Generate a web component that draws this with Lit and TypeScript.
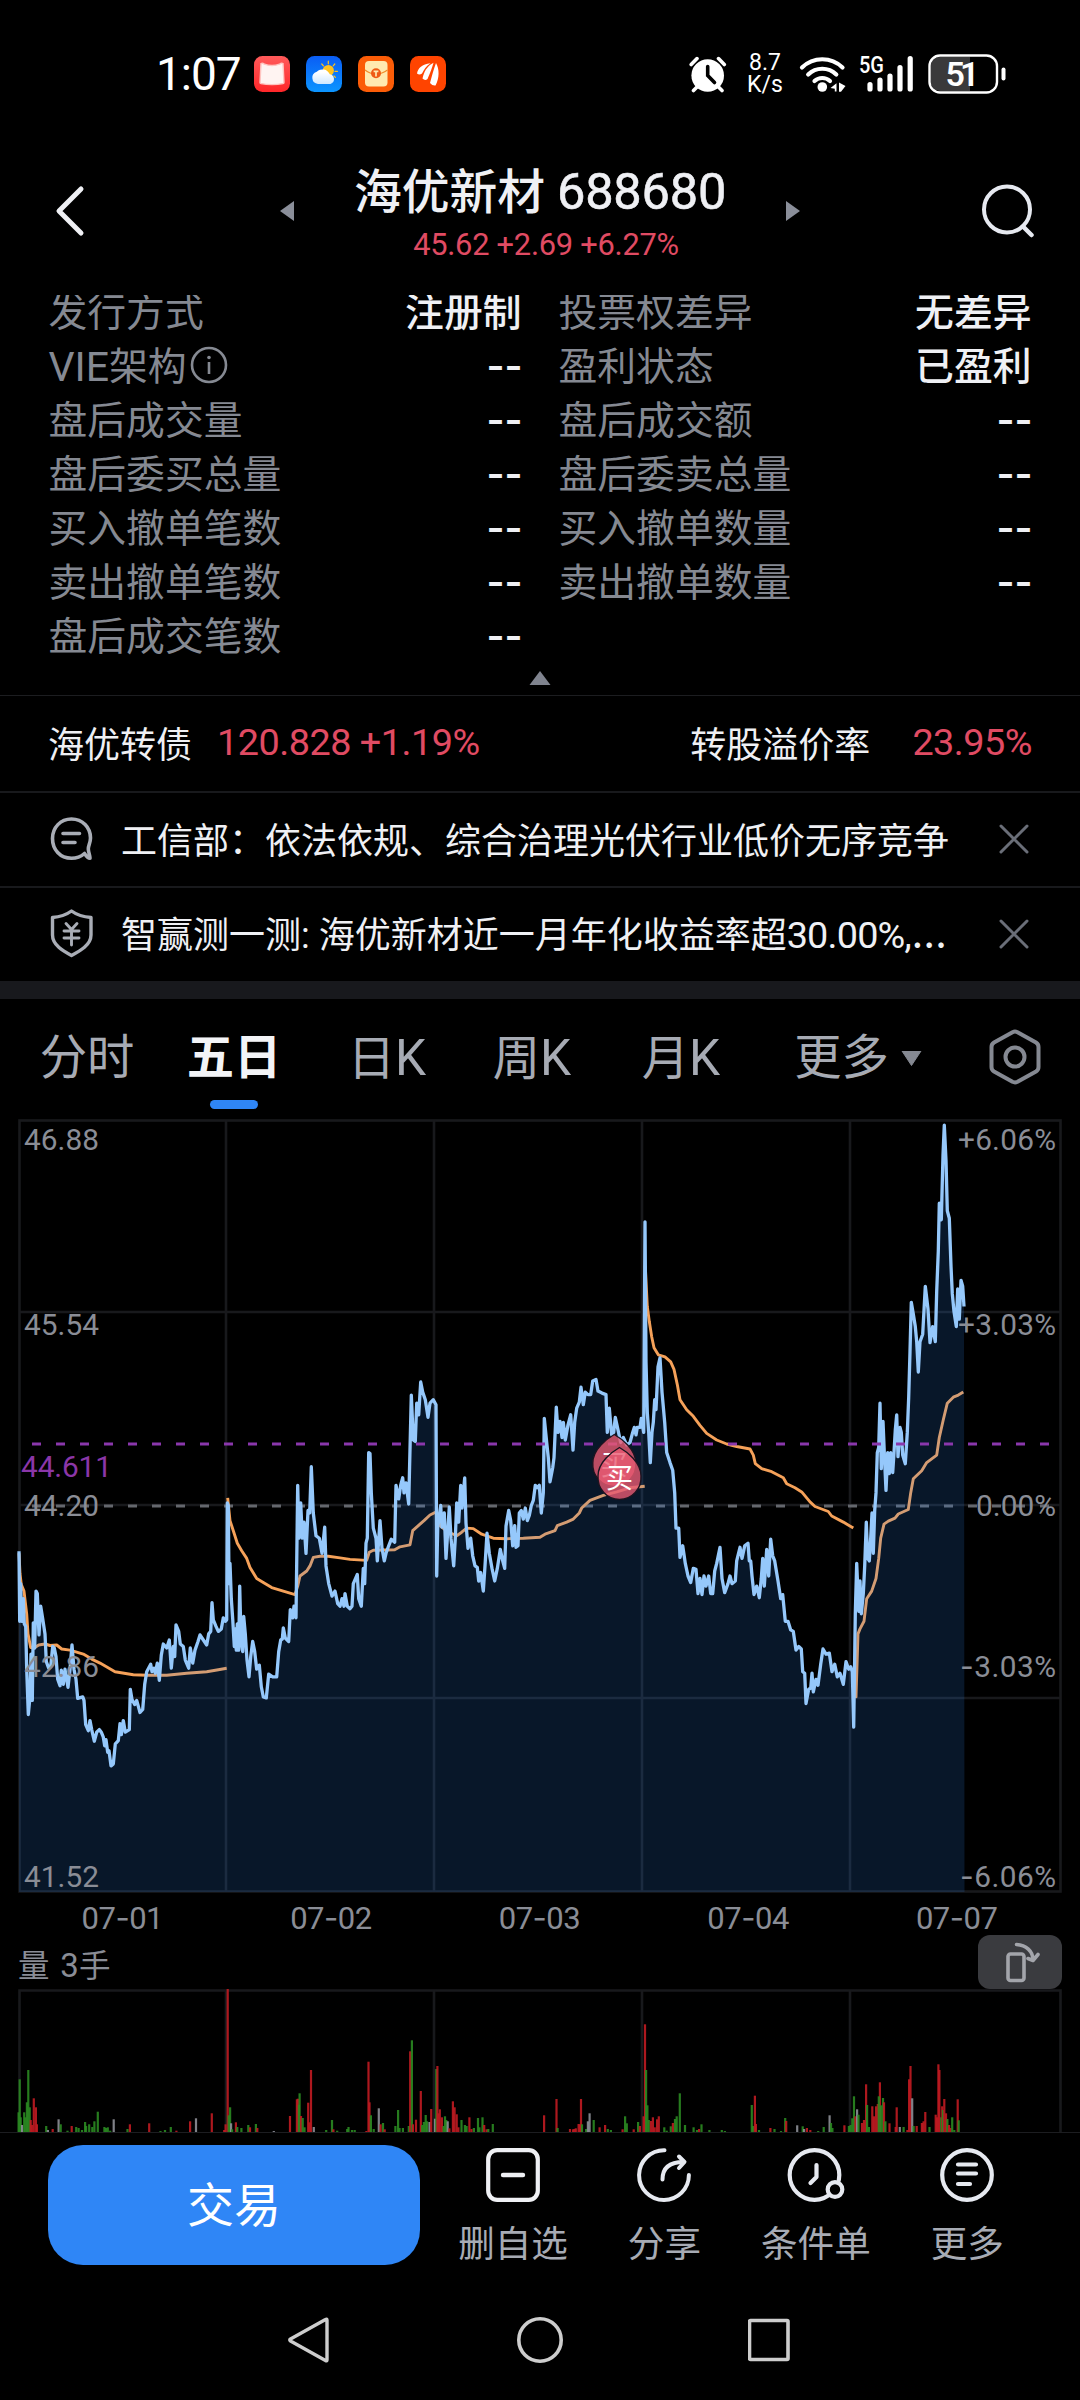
import { LitElement, html, svg, css } from "lit";
import { customElement } from "lit/decorators.js";

/* ---------- series data ---------- */

/** Price chart samples are stored in thirds of a pixel across and in 1/1.985 px down. */
const PRICE_X = 3;
const PRICE_Y = 1.985;
const PRICE_TOP = 9;

type Segment = { from: number; points: string };

const PRICE: Segment[] = [
  {
    from: 0,
    points:
      "57,876 59,1015 62,940 65,1015 70,970 73,1020 77,1025 80,1110 85,1200 90,1165 93,1080 97,1172 100,1018 104,1068 108,955 112,960 117,1042 122,985 128,1010 135,1040 139,1095 146,1108 152,1105 158,1065 163,1068 168,1085 173,1130 180,1143 184,1112 190,1140 195,1110 204,1146 210,1110 216,1062 222,1110 228,1130 233,1168 248,1165 252,1172 257,1220 265,1232 270,1212 275,1230 283,1253 290,1235 298,1230 304,1235 310,1245 314,1262 318,1250 323,1275 327,1272 333,1302 340,1298 346,1258 355,1252 360,1218 364,1240 370,1212 376,1235 388,1230 391,1150 396,1170 404,1180 410,1172 420,1196 428,1190 434,1140 440,1115 452,1100 456,1115 462,1108 466,1118 472,1098 478,1132 484,1082 490,1060 500,1068 508,1052 514,1108 520,1065 524,1085 528,1022 536,1035 541,1060 550,1065 556,1092 566,1108 571,1068 578,1098 585,1072 594,1055 600,1042 608,1050 620,1062 626,1040 632,1035 636,978 640,1012 648,1025 655,1035 664,1030 670,1008 676,1015 680,1012 682,780 685,785 687,940 690,900 694,970 698,1010 703,1065 706,1030 709,1072 712,1020 716,1072 719,945 723,1050 728,1075 731,1005 736,1040 741,1092 747,1125 752,1085 758,1055 764,1075 770,1110 778,1102 784,1145 790,1165 799,1167 806,1120 818,1125 830,1125 836,1075 842,1052 847,1050 850,1028 856,1048 866,1055 871,992 878,1008 882,985 888,1008 893,745 897,850 902,780 907,850 912,818 918,880 924,795 929,800 934,708 940,800 948,845 958,850 966,880 974,828 978,905 986,940 996,965 1005,955 1013,980 1020,985 1026,970 1032,985 1035,960 1042,985",
  },
  {
    from: 1050,
    points:
      "0,990 6,985 10,940 22,922 26,970 34,985 40,910 44,940 48,860 52,850 56,680 60,682 64,760 70,830 78,850 82,895 90,815 96,870 103,895 108,880 116,865 124,852 134,858 138,745 146,772 152,745 158,730 162,760 168,740 176,782 184,566 190,655 196,658 200,582 206,605 212,540 218,560 226,575 234,610 240,582 250,575 258,585 260,925 263,830 272,785 276,828 283,800 288,890 292,850 298,788 303,850 311,905 316,850 320,780 326,818 332,745 336,790 344,730 348,820 354,870 362,850 368,885 375,905 382,908 386,935 392,918 400,955 405,905 411,840 418,880 426,910 434,935 442,910 451,872 458,895 464,910 468,826 476,795 482,815 488,865 494,825 498,868 504,865 508,800 514,795 520,812 526,790 532,815 538,805 544,785 550,775 556,745 562,750 568,745 574,800 580,760 583,612 590,660 595,690 600,738 608,710 612,690 619,590 624,640 630,618 636,650 640,620 646,655 654,625 662,605 669,675 674,620 680,592 688,580 693,550 700,585 706,560 714,565 722,565 728,538 738,535 744,558 756,562 768,565 772,640 778,592 785,645 791,640 796,610 804,635 812,660 820,650 830,665 840,660 848,640 853,630 858,645 862,630 870,630 874,612 881,640 885,222 888,500 892,600 896,640 901,700 906,640 910,620 914,575 918,595 924,510 930,492 936,560 944,620 950,680 960,700 968,715 974,760 978,830 986,830 990,888 998,865 1006,900 1014,925 1022,938 1030,910 1038,912 1044,960",
  },
  {
    from: 2100,
    points:
      "0,930 6,962 12,925 18,945 26,925 32,960 38,960 44,915 50,900 60,868 66,930 74,958 84,940 90,925 96,940 106,935 110,895 120,868 126,890 134,865 144,860 148,895 152,895 156,925 162,962 170,945 178,968 184,930 188,890 193,945 200,872 206,925 212,852 218,885 224,895 234,935 242,970 248,962 256,1015 264,1015 272,1032 280,1035 288,1072 296,1065 304,1070 308,1115 314,1118 318,1178 326,1150 332,1148 336,1118 340,1155 348,1130 354,1142 362,1100 369,1070 378,1080 388,1078 396,1115 404,1100 412,1125 420,1118 430,1140 438,1095 446,1110 452,1105 457,1115 461,1225 463,1140 466,1000 470,900 476,995 480,935 484,1000 490,960 494,905 499,818 503,890 508,895 512,850 516,800 520,880 524,795 528,760 532,680 536,670 540,582 544,712 549,618 554,700 558,755 563,680 568,722 572,680 578,720 582,680 586,635 590,605 594,688 600,630 604,640 608,685 616,702 622,640 626,570 630,480 634,382 640,405 646,430 650,460 655,520 660,460 668,445 676,350 684,395 690,462 698,430 706,460 710,360 715,280 718,185 724,218 729,90 733,30 738,100 742,200 748,215 753,310 757,365 762,400 769,430 773,355 778,415 783,338 788,350 792,390",
  },
];

const AVERAGE: Segment[][] = [
  [
    {
      from: 0,
      points:
        "57,880 60,920 64,942 72,955 80,1000 84,1040 92,1067 102,1068 116,1062 135,1060 150,1063 170,1062 185,1070 210,1072 250,1080 275,1090 300,1098 345,1115 400,1121 440,1122 500,1122 560,1118 620,1115 655,1111 680,1108",
    },
  ],
  [
    {
      from: 0,
      points:
        "683,770 690,815 700,835 712,860 725,875 740,890 750,908 770,930 790,938 815,948 850,955 885,962 893,945 900,925 920,915 930,905 940,888 960,886 985,886 1020,889",
    },
    {
      from: 1050,
      points:
        "0,892 50,894 58,878 70,874 134,873 150,867 180,863 188,835 210,822 222,815 240,804 258,798",
    },
  ],
  [
    {
      from: 1050,
      points:
        "262,802 270,825 290,836 320,845 335,838 350,830 370,831 395,842 430,850 470,851 520,850 570,848 585,842 615,835 622,825 650,818 670,812 688,800 695,790 720,775 760,765 800,758 840,750 884,747",
    },
  ],
  [
    {
      from: 1050,
      points:
        "886,310 892,390 898,420 905,450 912,472 925,486 945,490 962,500 972,515 982,545 990,575 1010,595 1030,608",
    },
    {
      from: 2100,
      points:
        "0,626 20,642 50,655 80,663 110,668 150,673 160,685 166,702 185,712 215,718 250,730 260,742 285,750 305,758 330,778 345,787 385,797 395,806 430,818 460,830",
    },
  ],
  [
    {
      from: 2100,
      points:
        "459,1120 468,1165 474,1040 480,1030 492,1015 500,970 515,955 528,930 536,890 542,850 552,822 565,816 585,810 595,802 625,793 632,760 640,732 665,716 680,700 710,685 718,650 730,615 742,582 760,570 775,566 790,560",
    },
  ],
];

/** Volume bars: colour key, then x and top of the bar in a finer raster. */
const VOLUME_X = 2.904;
const VOLUME_BASE = 756;
const VOLUME: Segment[] = [
  {
    from: 0,
    points:
      "g57,598 g54,697 g60,712 w64,735 g70,697 g74,712 g78,667 g82,570 g86,682 r89,720 r93,735 r98,655 r104,682 r107,733 g134,738 w139,750 r153,747 w170,718 g176,733 g196,752 r208,738 g221,741 g228,744 g238,750 g247,726 g250,738 g259,733 g268,741 g274,724 g284,695 g303,741 g308,744 g313,742 g320,752 w330,718 g370,747 r377,733 r433,730 g466,753 g479,750 g496,741 r512,752 r552,724 w569,715 r615,700 r651,750 r655,733 r661,327 g664,706 g668,682 w671,730 g674,748 r685,727 g689,741 g701,744 g721,735 r726,742 g743,732 r747,744 w795,753 r842,708 r862,658 r865,656 g870,640 g868,674 r874,708 g879,714 g884,742 r895,668 r903,570 r899,727 w911,741 g947,750 g964,720 r968,748 g979,752 g1008,747 g1012,741 g1022,750 g1030,750 r1064,753 r1070,545 r1073,667 g1077,706 g1085,747 w1100,685 r1105,733 g1112,729 r1117,748 g1148,738 g1156,690 g1160,744 g1170,744 g1187,738 r1191,514 g1196,481 r1199,733 r1208,719 r1222,633 g1226,735 g1231,726 g1236,705 g1240,724 w1247,726 r1252,687 w1263,716 g1267,567 r1270,558 r1273,700 r1277,688 r1283,712 g1288,738 g1292,709 g1296,720 w1300,724 r1305,745 r1315,664 r1320,682 r1326,703 r1331,742 g1340,720 g1350,735 g1355,738 r1363,712 r1369,747 g1376,744 g1388,714 g1392,742 g1401,712 r1406,735 r1413,748 g1418,747 g1431,732",
  },
  {
    from: 1568,
    points:
      "r12,706 r48,657 g51,744 r87,747 r96,748 r100,747 r104,745 r112,732 r116,733 r119,657 g122,733 g134,747 w139,724 w144,700 g156,720 r173,742 r189,735 g197,747 g206,750 r240,748 g247,709 g252,730 r272,748 g285,726 r290,738 r301,709 r305,433 g308,570 g312,676 g316,720 r322,723 r328,712 r333,742 r340,718 r345,709 g361,742 g368,752 g380,739 r386,729 g392,717 g397,709 g406,640 g421,735 g446,742 g456,750 r462,747 g469,733 g492,750 g528,750 g537,753 g615,675 g619,738 r624,647 r627,732 g636,750 r669,744 g681,747 g700,753 g712,714 r715,723 w747,736 g763,739 w767,747 r775,744 r785,750 g808,753 g824,741 w841,706 g845,729 g849,744 r884,736 g897,738 g902,735 g907,715 g912,649 r916,709 w921,688 g925,704 r935,729 r941,720 r947,613 g950,675 g955,741 r965,679 r970,709 r976,679 r981,672 r987,607 g984,649 g990,676 g996,654 r999,667 g1003,724 r1015,730 r1036,682 r1033,741 w1045,741 g1056,741 r1067,750 r1072,598 r1076,558 w1081,655 g1085,738 r1094,738 r1109,729 r1114,724 r1119,696 g1131,741 r1149,704 r1153,712 r1157,553 r1160,570 g1165,712 r1168,679 g1170,690 r1174,657 r1179,700 g1183,717 r1188,735 r1192,744 g1197,712 g1203,750 r1213,658 g1216,721",
  },
];

const BAR_COLORS: Record<string, string> = { r: "#c01b21", g: "#2a8a21", w: "#8d8f97" };

const toPoints = (segments: Segment[]) =>
  segments
    .flatMap((s) =>
      s.points.split(" ").map((p) => {
        const [x, y] = p.split(",").map(Number);
        return `${((x + s.from) / PRICE_X).toFixed(1)},${(y / PRICE_Y - PRICE_TOP).toFixed(1)}`;
      })
    )
    .join(" ");

const pricePoints = toPoints(PRICE);
const bars = VOLUME.flatMap((s) =>
  s.points.split(" ").map((p) => {
    const [x, y] = p.slice(1).split(",").map(Number);
    return { x: (x + s.from) / VOLUME_X, h: (VOLUME_BASE - y) / 3, fill: BAR_COLORS[p[0]] };
  })
);

const COLUMNS = [226, 434, 642, 850];

const STATS: [string, string][][] = [
  [
    ["发行方式", "注册制"],
    ["VIE架构", "--"],
    ["盘后成交量", "--"],
    ["盘后委买总量", "--"],
    ["买入撤单笔数", "--"],
    ["卖出撤单笔数", "--"],
    ["盘后成交笔数", "--"],
  ],
  [
    ["投票权差异", "无差异"],
    ["盈利状态", "已盈利"],
    ["盘后成交额", "--"],
    ["盘后委卖总量", "--"],
    ["买入撤单数量", "--"],
    ["卖出撤单数量", "--"],
  ],
];

/* ---------- icons ---------- */

const closeIcon = html`<svg class="close" width="30" height="30" viewBox="0 0 30 30">
  <path d="M2 2 28 28M28 2 2 28" stroke="#6a6e78" stroke-width="3" stroke-linecap="round" fill="none" />
</svg>`;

const infoIcon = html`<svg class="info" width="38" height="38" viewBox="0 0 38 38">
  <circle cx="19" cy="19" r="17" fill="none" stroke="#858992" stroke-width="2.6" />
  <circle cx="19" cy="11.5" r="1.8" fill="#858992" />
  <path d="M19 16V28" stroke="#858992" stroke-width="2.6" />
</svg>`;

/* ---------- status bar ---------- */

@customElement("status-bar")
export class StatusBar extends LitElement {
  static styles = css`
    :host {
      display: flex;
      align-items: center;
      justify-content: space-between;
      height: 150px;
      box-sizing: border-box;
      padding: 0 74px 2px 156px;
      color: #fff;
      font-family: Roboto, "Noto Sans CJK SC", sans-serif;
    }
    .side {
      display: flex;
      align-items: center;
    }
    .time {
      font-size: 46px;
      line-height: 50px;
      width: 98px;
      letter-spacing: -1px;
      font-weight: 450;
    }
    .apps {
      display: flex;
      gap: 16px;
    }
    .speed {
      width: 46px;
      margin: 0 11px 0 15px;
      text-align: center;
      font-size: 23px;
      line-height: 22px;
      font-weight: 450;
    }
    .signal {
      margin-left: 12px;
    }
    .battery {
      margin-left: 14px;
    }
    svg {
      display: block;
    }
  `;

  render() {
    return html`
      <div class="side">
        <span class="time">1:07</span>
        <div class="apps">
          <svg width="36" height="36" viewBox="0 0 36 36">
            <defs>
              <linearGradient id="a" x1="0" y1="0" x2="0" y2="1">
                <stop offset="0" stop-color="#ff5a5a" />
                <stop offset="1" stop-color="#ff2629" />
              </linearGradient>
            </defs>
            <rect width="36" height="36" rx="8.5" fill="url(#a)" />
            <path
              d="M7 7.5Q8.5 6.600 10.500 8.200 14 9.500 18 9.500T25.500 8.200Q27.500 6.600 29 7.500L30 26.500Q30 27.500 29 27.600 24 28.600 18 28.600T7 27.600Q6 27.500 6 26.500Z"
              fill="#fff4f2" stroke="#ffc4c0" stroke-width="1.4"
            />
          </svg>
          <svg width="36" height="36" viewBox="0 0 36 36">
            <defs>
              <linearGradient id="b" x1="0" y1="0" x2="0" y2="1">
                <stop offset="0" stop-color="#0a5df5" />
                <stop offset="1" stop-color="#0c95ff" />
              </linearGradient>
              <linearGradient id="c" x1="0" y1="0" x2="0" y2="1">
                <stop offset="0.2" stop-color="#fff" />
                <stop offset="1" stop-color="#cfe8ff" />
              </linearGradient>
            </defs>
            <rect width="36" height="36" rx="8.5" fill="url(#b)" />
            <circle cx="22.3" cy="14.5" r="5.6" fill="#ffc21f" />
            <path
              d="M22.3 5.2v2.6M15.8 8l1.6 1.8M28.8 8l-1.6 1.8M29 15.4h2.4M28 20l1.4 1.4"
              stroke="#ffc21f" stroke-width="1.2" stroke-linecap="round"
            />
            <path
              d="M12 28a6.3 6.3 0 0 1-1.2-12.3 8 8 0 0 1 13 2.6A5 5 0 0 1 24.5 28Z"
              fill="url(#c)"
            />
          </svg>
          <svg width="36" height="36" viewBox="0 0 36 36">
            <rect width="36" height="36" rx="8.5" fill="#fb5c07" />
            <rect x="7" y="5" width="22.5" height="25.5" rx="4" fill="#ffe9b0" />
            <path d="M7 14Q12 18 18 18T29.5 14" fill="none" stroke="#f08a2a" stroke-width="1.3" />
            <circle cx="18" cy="17.3" r="5" fill="#ef5a14" />
            <path d="M15.6 15.400h4.800M18 15.400v5" stroke="#ffe9b0" stroke-width="1.7" />
          </svg>
          <svg width="36" height="36" viewBox="0 0 36 36">
            <rect width="36" height="36" rx="8.5" fill="#ff4400" />
            <g fill="#fff">
              <path d="M7 17.500C8 12 12 8 20.500 7.200 16 10 14 13.500 12 17.500Q9.500 19.500 7 17.500Z" />
              <path d="M12.500 22.500C14 16 16.500 10.500 23.500 6.800 22 12 20 17.500 17.500 23Q15 25 12.500 22.500Z" />
              <path d="M20 27C22 20 23.500 13.500 26 7 29.500 13 29.500 22 25.500 29.500Q22.500 30 20 27Z" />
            </g>
          </svg>
        </div>
      </div>
      <div class="side">
        <svg width="38" height="38" viewBox="0 0 38 38">
          <circle cx="18.7" cy="20.500" r="16.300" fill="#fff" />
          <path
            d="M2.200 9.500 8 3.600M35.300 9.500 29.500 3.600M8 32 4.500 35.500M29.500 32 33 35.500"
            stroke="#fff" stroke-width="3.600" stroke-linecap="round"
          />
          <path d="M18.700 11.500V20.500L25.500 27.500" fill="none" stroke="#000" stroke-width="3.600" stroke-linecap="round" />
        </svg>
        <div class="speed">8.7<br />K/s</div>
        <svg width="48" height="38" viewBox="0 0 48 38">
          <g fill="none" stroke="#fff" stroke-width="4.200" stroke-linecap="round">
            <path d="M3 12.500A29 29 0 0 1 43.500 12.500" />
            <path d="M9.200 19.500A20 20 0 0 1 37.300 19.500" />
            <path d="M15.500 26A11.500 11.500 0 0 1 31 26" />
          </g>
          <circle cx="23.300" cy="32" r="4.800" fill="#fff" />
          <path d="M37.500 28.200V36.500H35.800V33.800L31.500 33ZM40 27.500 46.500 31 42 36.800H40Z" fill="#fff" />
        </svg>
        <svg class="signal" width="55" height="38" viewBox="0 0 55 38">
          <text x="0" y="18.300" font-size="23" font-weight="500" fill="#fff" textLength="25" lengthAdjust="spacingAndGlyphs">5G</text>
          <path d="M11 29.500V34M21 25V34M31 21V34M41 12.500V34M51.200 3.500V34" stroke="#fff" stroke-width="5.200" stroke-linecap="round" />
        </svg>
        <svg class="battery" width="78" height="40" viewBox="0 0 78 40">
          <path d="M12 3H42V37H12A9.500 9.500 0 0 1 2.500 27.500V12.500A9.500 9.500 0 0 1 12 3Z" fill="#3a3a3b" />
          <rect x="1.500" y="1.500" width="67.500" height="37" rx="10.500" fill="none" stroke="#fff" stroke-width="2.400" />
          <path d="M75.500 15.500V24.500" stroke="#fff" stroke-width="4" stroke-linecap="round" />
          <text x="17.500" y="32" font-size="34" font-weight="600" fill="#fff" textLength="34">51</text>
        </svg>
      </div>
    `;
  }
}

/* ---------- five-day chart ---------- */

@customElement("price-chart")
export class PriceChart extends LitElement {
  static styles = css`
    :host {
      display: block;
      font-family: Roboto, "Noto Sans CJK SC", sans-serif;
    }
    svg {
      display: block;
    }
    .axis {
      font-size: 29.8px;
      fill: #8a8d96;
    }
    .cost {
      fill: #8b36a8;
    }
    .dash {
      font-family: Inter, sans-serif;
    }
    .pin {
      font-size: 27px;
      font-weight: 400;
      fill: #fff;
    }
    .dates {
      display: grid;
      grid-template-columns: repeat(5, 208.6px);
      padding-left: 18px;
      height: 52px;
      line-height: 50px;
      text-align: center;
      color: #8a8d96;
      font-size: 31px;
      letter-spacing: -0.5px;
    }
    .legend {
      display: flex;
      justify-content: space-between;
      height: 44px;
      padding: 0 18px;
    }
    .volume {
      color: #8a8d96;
      font-size: 31.5px;
      line-height: 42px;
    }
    .digit {
      font-size: 33px;
      margin-left: 3px;
    }
    .rotate {
      width: 84px;
      height: 54px;
      margin-top: -10px;
      border-radius: 12px;
      background: #3a3b3f;
    }
  `;

  private axisLabel(text: string, y: number, side: "l" | "r") {
    const minus = text.startsWith("-");
    const zero = text.startsWith("0");
    const x = side === "l" ? 24 : zero ? 976 : minus ? 960 : 958;
    const w = side === "l" ? 75 : zero ? 80 : minus ? 96 : 98;
    return minus
      ? svg`<text class="axis" x=${x} y=${y} textLength=${w}><tspan class="dash">-</tspan>${text.slice(1)}</text>`
      : svg`<text class="axis" x=${x} y=${y} textLength=${w}>${text}</text>`;
  }

  private pin(x: number, y: number) {
    return svg`<g transform="translate(${x} ${y})">
      <path d="M0-31.500C7-27.500 21.500-17 21.500-3A21.500 22 0 0 1 0 20.500 21.500 22 0 0 1-21.500-3C-21.500-17-7-27.500 0-31.500Z"
        fill="#e95a72" fill-opacity="0.800" stroke="#1c1420" stroke-width="1.400" />
      <text class="pin" x="0" y="9" text-anchor="middle">买</text>
    </g>`;
  }

  render() {
    return html`
      <svg width="1080" height="774" viewBox="0 0 1080 774">
        <g stroke="#18191c" fill="none">
          <rect x="19.500" y="1.500" width="1041" height="771" stroke-width="2.600" />
          ${COLUMNS.map((x) => svg`<path d="M${x} 1V773" stroke-width="2.600" />`)}
          ${[193, 386, 579].map((y) => svg`<path d="M20 ${y}H1060" stroke-width="2.600" />`)}
        </g>
        <path d="M32 387H1049" stroke="#64676d" stroke-width="2.800" stroke-dasharray="9 15" />
        ${AVERAGE.map(
          (day) => svg`<polyline points=${toPoints(day)} fill="none" stroke="#f5a159" stroke-width="2.900" stroke-linejoin="round" />`
        )}
        <polygon points="19,773 ${pricePoints} 964.500,773" fill="rgb(47,134,246)" fill-opacity="0.170" />
        <polyline points=${pricePoints} fill="none" stroke="#95c8fb" stroke-width="3.300" stroke-linejoin="round" />
        <path d="M32 325H1049" stroke="#8a37ac" stroke-width="2.800" stroke-dasharray="9 15" />
        ${this.pin(614.3, 347)} ${this.pin(619.5, 360)}
        ${this.axisLabel("46.88", 31, "l")} ${this.axisLabel("45.54", 216, "l")}
        ${this.axisLabel("44.20", 397, "l")} ${this.axisLabel("42.86", 558, "l")}
        ${this.axisLabel("41.52", 767.5, "l")}
        <text class="axis cost" x="21" y="358" textLength="91">44.611</text>
        ${this.axisLabel("+6.06%", 31, "r")} ${this.axisLabel("+3.03%", 216, "r")}
        ${this.axisLabel("0.00%", 397, "r")} ${this.axisLabel("-3.03%", 558, "r")}
        ${this.axisLabel("-6.06%", 767.5, "r")}
      </svg>
      <div class="dates">
        ${["01", "02", "03", "04", "07"].map(
          (d) => html`<span>07<span class="dash">-</span>${d}</span>`
        )}
      </div>
      <div class="legend">
        <span class="volume">量 <span class="digit">3</span>手</span>
        <svg class="rotate" width="84" height="54" viewBox="0 0 84 54">
          <g fill="none" stroke="#a3a5ab" stroke-width="3.600" stroke-linecap="round" stroke-linejoin="round">
            <rect x="30" y="19" width="16" height="26.500" rx="2.500" />
            <path d="M38.500 9.500C48 10 55 16 55 25M50 23.500 55 25.500 60 19.500" />
          </g>
        </svg>
      </div>
      <svg width="1080" height="143" viewBox="0 0 1080 143">
        <g stroke="#18191c" fill="none" stroke-width="2.600">
          <path d="M19.500 143V1.500H1060.500V143" />
          ${COLUMNS.map((x) => svg`<path d="M${x} 1V143" />`)}
        </g>
        ${bars.map(
          (b) => svg`<rect x=${(b.x - 1.05).toFixed(1)} y=${(143 - b.h).toFixed(1)} width="2.200" height=${b.h.toFixed(1)} fill=${b.fill} fill-opacity="0.900" />`
        )}
      </svg>
    `;
  }
}

/* ---------- page ---------- */

@customElement("app-root")
export class AppRoot extends LitElement {
  static styles = css`
    :host {
      display: block;
      width: 1080px;
      height: 2400px;
      overflow: hidden;
      background: #000;
      color: #eff0f4;
      font-family: Roboto, "Noto Sans CJK SC", sans-serif;
    }
    svg {
      display: block;
      flex: none;
    }
    .header {
      display: grid;
      grid-template-columns: 280px 14px 1fr 14px 280px;
      height: 145px;
      box-sizing: border-box;
      padding-bottom: 23px;
      align-items: center;
    }
    .back {
      margin-left: 54px;
    }
    .search {
      margin: 0 45px 0 auto;
    }
    .title {
      text-align: center;
      padding-top: 8px;
    }
    .name {
      font-size: 47.8px;
      line-height: 56px;
      font-weight: 500;
      white-space: nowrap;
    }
    .code {
      font-size: 50.5px;
      font-weight: 400;
      -webkit-text-stroke: 0.6px;
      letter-spacing: -0.2px;
    }
    .quote {
      font-size: 30.8px;
      line-height: 44px;
      margin: 2px 0 0 12px;
      color: #e04b63;
      letter-spacing: -0.25px;
    }
    .stats {
      height: 400px;
      overflow: hidden;
    }
    .columns {
      display: flex;
      gap: 37px;
      padding: 0 48.5px;
      margin-top: -9.5px;
      height: 385px;
    }
    .column {
      flex: 1;
    }
    .stat {
      display: flex;
      justify-content: space-between;
      font-size: 38.8px;
      line-height: 54px;
      height: 54px;
      color: #eff0f4;
      font-weight: 500;
    }
    .label {
      display: flex;
      align-items: center;
      color: #858992;
      font-weight: 400;
    }
    .label .vie {
      font-size: 41px;
    }
    .label .info {
      margin: -4px 0 0 3px;
    }
    .dashes {
      font-family: Inter, sans-serif;
      font-weight: 600;
      line-height: 51px;
      margin-right: -1px;
    }
    .fold {
      margin: 0.5px auto 0;
    }
    .row {
      display: flex;
      align-items: center;
      height: 93px;
      box-sizing: border-box;
      padding: 0 48px 3px;
      font-size: 36px;
      white-space: nowrap;
    }
    .rule {
      height: 2px;
      background: #18191c;
    }
    .bond {
      height: 96px;
      border-top: 1px solid #1c1d20;
    }
    .num {
      color: #e04b63;
      font-size: 37.8px;
      letter-spacing: -0.5px;
    }
    .price {
      margin-left: 25px;
    }
    .premium {
      margin: 0 42px 0 auto;
    }
    .news {
      margin-left: 27px;
      width: 834px;
      overflow: hidden;
    }
    .latin {
      font-size: 37.8px;
      letter-spacing: -0.8px;
    }
    .ellipsis {
      font-family: Inter, sans-serif;
      font-size: 41px;
      line-height: 30px;
    }
    .close {
      margin: 2px 3px 0 auto;
    }
    .ask .news {
      margin-bottom: 3px;
    }
    .band {
      height: 18px;
      background: #18191d;
    }
    .tabs {
      display: grid;
      grid-template-columns: 174px 120px 186px 104px 194px 160px 142px;
      height: 120px;
      font-size: 47.3px;
      line-height: 118px;
      text-align: center;
      color: #a7abb4;
      font-weight: 400;
    }
    .k {
      font-size: 49.5px;
    }
    .active {
      color: #f3f4f7;
      font-weight: 700;
      display: flex;
      flex-direction: column;
      align-items: center;
    }
    .active::after {
      content: "";
      width: 48px;
      height: 9px;
      border-radius: 5px;
      margin-top: -17px;
      background: #2f86f6;
    }
    .more {
      display: flex;
      align-items: center;
      justify-content: center;
      gap: 12px;
      padding-bottom: 2px;
    }
    .gear {
      margin: 30px 39px 0 auto;
    }
    .actions {
      display: flex;
      height: 157px;
      box-sizing: border-box;
      border-top: 1px solid #1c1d20;
      padding: 12px 37px 0 48px;
    }
    .trade {
      width: 372px;
      height: 120px;
      border-radius: 35px;
      background: #2f86f6;
      color: #fff;
      font-size: 47px;
      line-height: 122px;
      text-align: center;
      margin-right: 17.5px;
    }
    .action {
      width: 151.5px;
      display: flex;
      flex-direction: column;
      align-items: center;
      padding-top: 2.5px;
      font-size: 36.6px;
      line-height: 50px;
      color: #a7abb4;
      font-weight: 400;
      gap: 18px;
    }
    .navbar {
      display: flex;
      justify-content: center;
      align-items: center;
      gap: 185px;
      height: 101px;
    }
  `;

  private stat([label, value]: [string, string]) {
    const vie = label.startsWith("VIE");
    return html`<div class="stat">
      <span class="label">${vie ? html`<span class="vie">VIE</span>${label.slice(3)}${infoIcon}` : label}</span>
      <span class=${value === "--" ? "dashes" : "value"}>${value}</span>
    </div>`;
  }

  render() {
    return html`
      <status-bar></status-bar>
      <div class="header">
        <svg class="back" width="32" height="52" viewBox="0 0 32 52">
          <path d="M27 4 5 26 27 48" fill="none" stroke="#eff0f4" stroke-width="5" stroke-linecap="round" stroke-linejoin="round" />
        </svg>
        <svg width="14" height="20" viewBox="0 0 14 20"><path d="M14 0V20L0 10Z" fill="#8a8e99" /></svg>
        <div class="title">
          <div class="name">海优新材 <span class="code">688680</span></div>
          <div class="quote">45.62 +2.69 +6.27%</div>
        </div>
        <svg width="14" height="20" viewBox="0 0 14 20"><path d="M0 0V20L14 10Z" fill="#8a8e99" /></svg>
        <svg class="search" width="54" height="54" viewBox="0 0 54 54">
          <circle cx="26" cy="25.500" r="23" fill="none" stroke="#e6e9f0" stroke-width="4" />
          <path d="M42 42.500 50.500 51" stroke="#e6e9f0" stroke-width="4.500" stroke-linecap="round" />
        </svg>
      </div>

      <div class="stats">
        <div class="columns">
          ${STATS.map((column) => html`<div class="column">${column.map((s) => this.stat(s))}</div>`)}
        </div>
        <svg class="fold" width="22" height="14" viewBox="0 0 22 14"><path d="M11 0 21.500 14H0.500Z" fill="#80848f" /></svg>
      </div>

      <div class="row bond">
        <span>海优转债</span><span class="num price">120.828 +1.19%</span>
        <span class="premium">转股溢价率</span><span class="num">23.95%</span>
      </div>
      <div class="rule"></div>
      <div class="row">
        <svg width="46" height="46" viewBox="0 0 46 46">
          <g fill="none" stroke="#a9adb6" stroke-width="3.600" stroke-linecap="round" stroke-linejoin="round">
            <path d="M36.500 38.500C32.500 42 28 43.300 23.500 43.300 12 43.300 4.500 34.500 4.500 23.500S12.500 4 23.500 4 42.500 12.500 42.500 23C42.500 28 40 31 40.300 34 40.500 38 42 40 42 43.300 40 43.500 38.500 41.500 36.500 38.500Z" />
            <path d="M15 18.500H31.500M15 27.500H27" />
          </g>
        </svg>
        <span class="news">工信部：依法依规、综合治理光伏行业低价无序竞争</span>
        ${closeIcon}
      </div>
      <div class="rule"></div>
      <div class="row ask">
        <svg width="46" height="50" viewBox="0 0 46 50">
          <g fill="none" stroke="#a9adb6" stroke-width="3.400" stroke-linecap="round" stroke-linejoin="round">
            <path d="M23.500 3C29 7 36 9 43 9.500V27C43 37 32 43 23.500 47.500 15 43 4.500 37 4.500 27V9.500C11 9 18 7 23.500 3Z" />
            <path d="M18 15.500 23.500 21.500 29 15.500M16 23H31M16 30H31M23.500 22V37" stroke-width="2.900" />
          </g>
        </svg>
        <span class="news">智赢测一测: 海优新材近一月年化收益率超<span class="latin">30.00%</span>,<span class="ellipsis">…</span></span>
        ${closeIcon}
      </div>
      <div class="band"></div>

      <div class="tabs">
        <span>分时</span><span class="active">五日</span><span>日<span class="k">K</span></span
        ><span>周<span class="k">K</span></span><span>月<span class="k">K</span></span>
        <span class="more">更多
          <svg width="21" height="15" viewBox="0 0 21 15"><path d="M1 0H20L10.500 14.500Z" fill="#858992" stroke="#858992" stroke-linejoin="round" /></svg>
        </span>
        <svg class="gear" width="52" height="56" viewBox="0 0 52 56">
          <g fill="none" stroke="#858992" stroke-width="4" stroke-linejoin="round">
            <path d="M23.500 3.200Q26 2 28.500 3.200L47 13.500Q49.500 15 49.500 18V38Q49.500 41 47 42.500L28.500 52.800Q26 54 23.500 52.800L5 42.500Q2.500 41 2.500 38V18Q2.500 15 5 13.500Z" />
            <circle cx="26" cy="28" r="9.500" />
          </g>
        </svg>
      </div>

      <price-chart></price-chart>

      <div class="actions">
        <div class="trade">交易</div>
        <div class="action">
          <svg width="54" height="54" viewBox="0 0 54 54">
            <rect x="2.200" y="2.200" width="49.600" height="49.600" rx="9" fill="none" stroke="#eff0f4" stroke-width="4.200" />
            <path d="M17 27H37" stroke="#eff0f4" stroke-width="4.400" stroke-linecap="round" />
          </svg>
          <span>删自选</span>
        </div>
        <div class="action">
          <svg width="54" height="54" viewBox="0 0 54 54">
            <g fill="none" stroke="#e6e9f0" stroke-width="4" stroke-linecap="round" stroke-linejoin="round">
              <path d="M27.500 2.200A24.900 24.900 0 1 0 51.900 27" />
              <path d="M25.500 31.500C25.500 20 32 14 46.500 14M42 8.500 47.500 14 42 20" />
            </g>
          </svg>
          <span>分享</span>
        </div>
        <div class="action">
          <svg width="60" height="54" viewBox="0 0 60 54">
            <g fill="none" stroke="#e6e9f0" stroke-width="4.200" stroke-linecap="round" stroke-linejoin="round">
              <circle cx="28.500" cy="27" r="24.800" />
              <path d="M30.500 17V29L24.500 35" />
              <circle cx="49" cy="41.500" r="7.300" fill="#000" />
            </g>
          </svg>
          <span>条件单</span>
        </div>
        <div class="action">
          <svg width="54" height="54" viewBox="0 0 54 54">
            <g fill="none" stroke="#e6e9f0" stroke-width="4.200" stroke-linecap="round">
              <circle cx="27" cy="27" r="24.800" />
              <path d="M18 16.500H36M18 25.500H36M18 36H30" />
            </g>
          </svg>
          <span>更多</span>
        </div>
      </div>

      <div class="navbar">
        <svg width="46" height="48" viewBox="0 0 46 48">
          <path d="M41 4V44Q41 45.500 39.500 44.500L4.500 25Q3 24 4.500 23L39.500 3.500Q41 2.500 41 4Z" fill="none" stroke="#cdcdcd" stroke-width="3.400" stroke-linejoin="round" />
        </svg>
        <svg width="46" height="48" viewBox="0 0 46 48"><circle cx="23" cy="24" r="21.200" fill="none" stroke="#cdcdcd" stroke-width="3.600" /></svg>
        <svg width="46" height="48" viewBox="0 0 46 48"><rect x="1.500" y="4.500" width="38.500" height="39" rx="1" fill="none" stroke="#cdcdcd" stroke-width="3.600" /></svg>
      </div>
    `;
  }
}
